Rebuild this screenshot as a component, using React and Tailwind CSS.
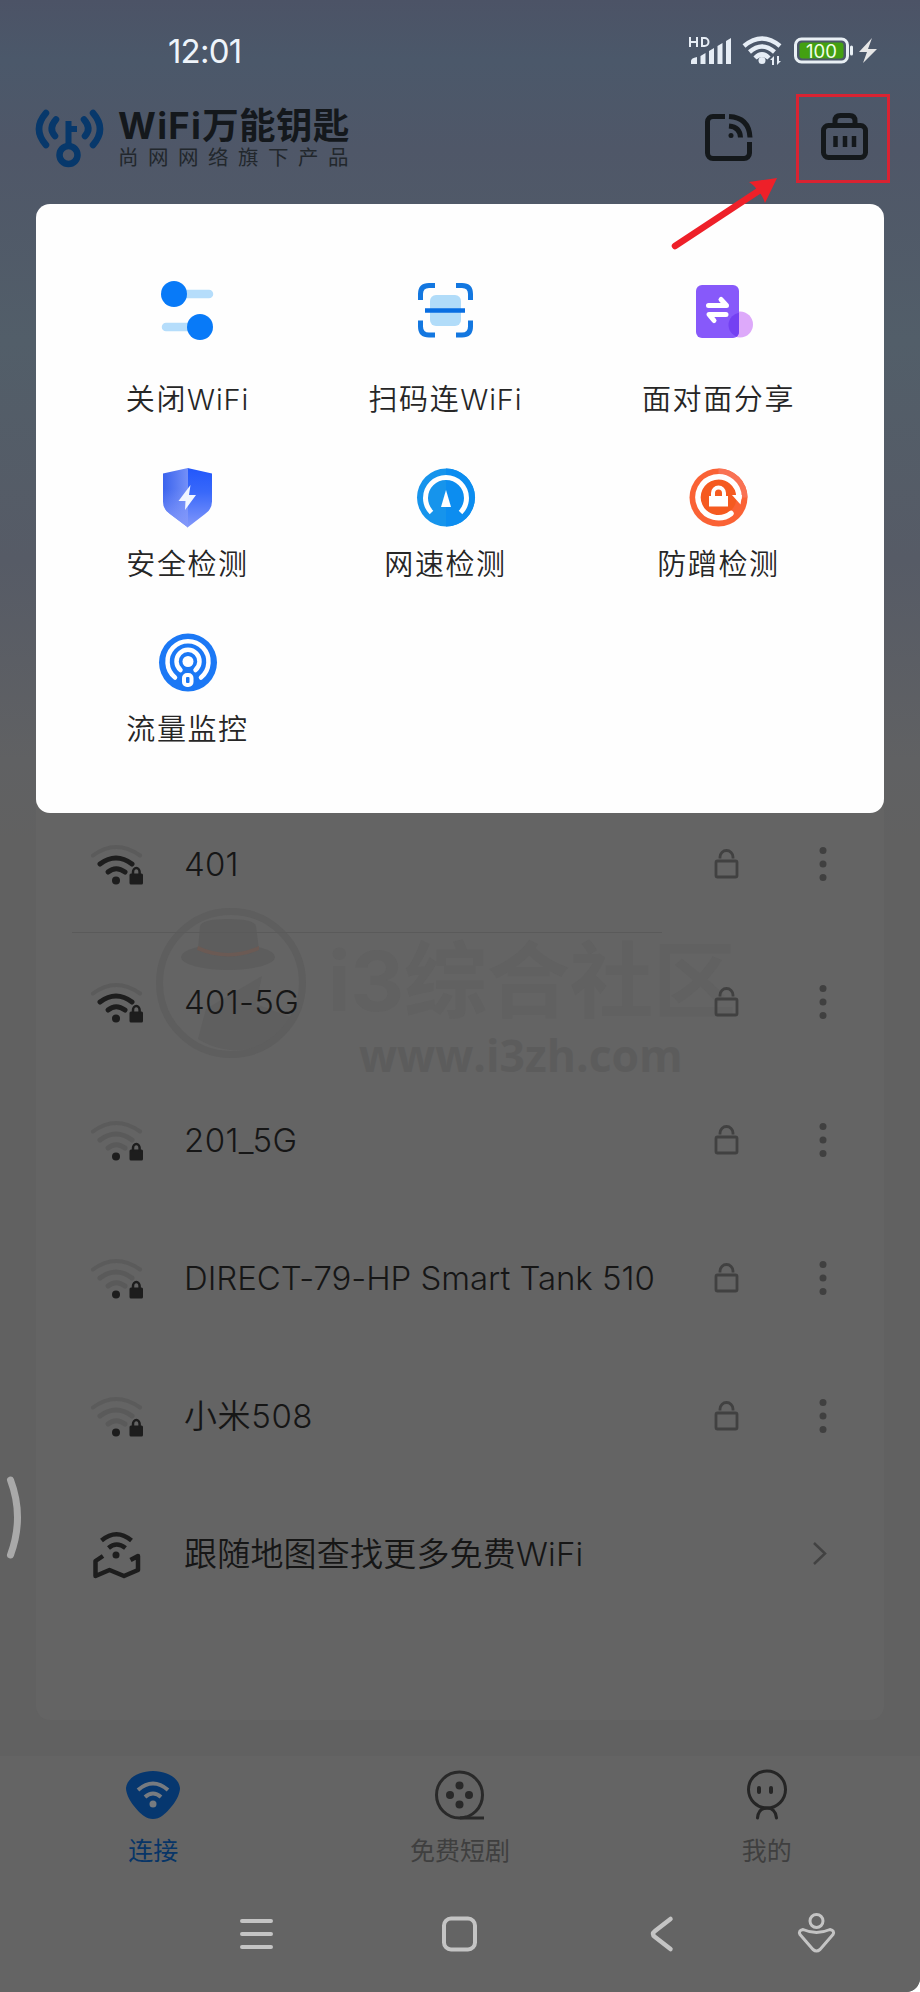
const cjk = 'font-["Inter","Noto_Sans_CJK_SC",sans-serif]';
const latin = 'font-["Inter","Noto_Sans_CJK_SC",sans-serif]';

function StatusBar() {
  return (
    <div className="flex h-[102px] items-center justify-between pl-[168px] pr-[42px] text-[#eef4fa]">
      <span className={`${latin} text-[33px] leading-none tracking-[-0.8px]`}>12:01</span>
      <svg className="h-[40px] w-[192px]" viewBox="686 31 192 40" fill="none">
        <g stroke="#e6edf5" strokeWidth="2">
          <path d="M690 37v10M697 37v10M690 42h7M702 38v8h2.500a4 4 0 0 0 0-8z" />
        </g>
        <g fill="#e6edf5">
          <path d="M691 64v-3q0-3 6-4v7zM700.500 56l5-3v11h-5zM709 51l5-3v16h-5zM717.500 46l5-3v21h-5zM726 41l5-3v26h-5z" />
          <circle cx="762" cy="60.500" r="3.500" />
          <path d="M770 60l4-4v9h-2v-5zM777 56h2v5h2l-4 4z" />
        </g>
        <g stroke="#e6edf5" strokeWidth="4.500">
          <path d="M744 46q18-15 36 0M749.500 52q12.500-11 25 0M755 58q7-7 14 0" />
        </g>
        <rect x="795.500" y="39" width="52" height="23" rx="6" stroke="#e9f0f5" strokeWidth="3" />
        <rect x="799.500" y="42.500" width="44" height="16" rx="3" fill="#43a012" />
        <path d="M851.500 47v7" stroke="#e9f0f5" strokeWidth="3" strokeLinecap="round" />
        <path d="M872 38l-13 14h8l-4 11 14-14h-9z" fill="#e6e6e6" />
        <text x="821.500" y="57.500" fontSize="18.500" textAnchor="middle" fill="#f1ffe9" fontFamily="Inter, sans-serif">100</text>
      </svg>
    </div>
  );
}

function Header() {
  return (
    <header className="flex h-[102px] justify-between pl-[34px] pr-[30px]">
      <div className="flex gap-[12px] text-[#14181c]">
        <svg className="h-[68px] w-[72px] mt-[4px]" viewBox="34 106 72 68" fill="none" stroke="#07386b" strokeLinecap="round">
          <path strokeWidth="6.500" d="M46 113q-14 16 0 32M93 113q14 16 0 32" />
          <path strokeWidth="6.500" d="M56 119.500q-8 9-1 16.500M84 119.500q8 9 1 16.500" />
          <path strokeWidth="6" strokeLinecap="butt" d="M68.500 121v25M70 129h7" />
          <circle cx="68.500" cy="155" r="9" strokeWidth="6.500" />
        </svg>
        <div className={cjk}>
          <div className="mt-[2px] text-[36.500px] font-bold leading-[44px] whitespace-nowrap">
            <span className="tracking-[1.300px]">WiFi</span>
            <span className="tracking-[0.300px]">万能钥匙</span>
          </div>
          <div className="-mt-[3px] text-[20.500px] leading-[26px] tracking-[9.500px] whitespace-nowrap text-[#22272c]">尚网网络旗下产品</div>
        </div>
      </div>
      <svg className="-mt-[10px] h-[102px] w-[198px]" viewBox="692 92 198 102" fill="none" stroke="#14181b" strokeWidth="5">
        <path d="M725 116.500h-12a5.500 5.500 0 0 0-5.500 5.500v31a5.500 5.500 0 0 0 5.500 5.500h31a5.500 5.500 0 0 0 5.500-5.500v-11" />
        <path d="M729 116.500q20 1 21 21M729 126q11 1 11.500 11.500" />
        <circle cx="731" cy="135.500" r="2.500" fill="#14181b" stroke="none" />
        <rect x="823.500" y="125.500" width="42" height="32" rx="5" />
        <path d="M835 125v-4q0-5.500 5.500-5.500h9q5.500 0 5.500 5.500v4" />
        <path d="M835.500 136v11M845 136v11M854 136v11" strokeWidth="4.500" />
        <rect x="797.500" y="95.500" width="91" height="86" stroke="#d92332" strokeWidth="3" />
      </svg>
    </header>
  );
}

const svg60 = "h-[60px] w-[60px] overflow-visible";

const TogglesIcon = () => (
  <svg className={svg60} viewBox="157 281 60 60">
    <path d="M175 294h34M166 327h34" stroke="#b5ddfb" strokeWidth="8.500" strokeLinecap="round" />
    <circle cx="174" cy="294" r="13" fill="#087af8" />
    <circle cx="200" cy="327" r="13" fill="#087af8" />
  </svg>
);
const ScanIcon = () => (
  <svg className={svg60} viewBox="415 281 60 60" fill="none" stroke="#1377e0" strokeWidth="5">
    <rect x="430" y="295" width="31" height="31" rx="6" fill="#b1dcf9" stroke="none" />
    <path d="M435 285.500h-6q-8.500 0-8.500 8.500v6M456 285.500h6q8.500 0 8.500 8.500v6M435 335h-6q-8.500 0-8.500-8.500v-6M456 335h6q8.500 0 8.500-8.500v-6" />
    <path d="M425 310.500h40" strokeWidth="4.500" stroke="#086ee2" />
  </svg>
);
const ShareIcon = () => (
  <svg className={svg60} viewBox="688 281 60 60">
    <defs>
      <clipPath id="cardClip"><rect x="696" y="285" width="43" height="53" rx="6" /></clipPath>
    </defs>
    <circle cx="740" cy="324.500" r="13" fill="#dda9fa" />
    <rect x="696" y="285" width="43" height="53" rx="6" fill="#8759fa" />
    <circle cx="741" cy="325" r="12.500" fill="#7440f2" clipPath="url(#cardClip)" />
    <g fill="none" stroke="#fff" strokeWidth="5" strokeLinecap="round" strokeLinejoin="round">
      <path d="M708.500 305.500h18l-5.500-6M726 314.500h-17l5 6" />
    </g>
  </svg>
);
const ShieldIcon = () => (
  <svg className={svg60} viewBox="157 467 60 60">
    <defs>
      <linearGradient id="shieldR" x1="0" y1="0" x2="0" y2="1"><stop offset="0" stopColor="#2257fb" /><stop offset=".4" stopColor="#3868fa" /><stop offset="1" stopColor="#8398fa" /></linearGradient>
      <linearGradient id="shieldL" x1="0" y1="0" x2="1" y2="0"><stop offset="0" stopColor="#3a63ed" /><stop offset="1" stopColor="#7490f8" /></linearGradient>
      <linearGradient id="shieldF" x1="0" y1="0" x2="0" y2="1"><stop offset=".35" stopColor="#8398fa" stopOpacity="0" /><stop offset="1" stopColor="#8398fa" /></linearGradient>
    </defs>
    <path d="M187.500 468l24.500 5.500v28q0 8-7 12.500l-17.500 13.500z" fill="url(#shieldR)" />
    <path d="M188 468l-25 5.500v28q0 8 7 12.500l18 13.500z" fill="url(#shieldL)" />
    <path d="M188 468l-25 5.500v28q0 8 7 12.500l18 13.500z" fill="url(#shieldF)" />
    <path d="M190.500 485l-12 16h7l-.5 9 11-15h-7z" fill="#f1f6ff" />
  </svg>
);
const SpeedIcon = () => (
  <svg className={svg60} viewBox="415 467 60 60">
    <circle cx="446" cy="497.500" r="29" fill="#1694ec" />
    <path d="M446 468.500a29 29 0 0 1 0 58z" fill="#0c8df0" />
    <path d="M431.500 512.500a20.500 20.500 0 1 1 29 0" fill="none" stroke="#fff" strokeWidth="5" />
    <path d="M446 490l5 17h-10z" fill="#fff" />
  </svg>
);
const GuardIcon = () => (
  <svg className={svg60} viewBox="688 467 60 60">
    <circle cx="718.500" cy="497.500" r="29" fill="#fa6235" />
    <path d="M718.500 468.500a29 29 0 0 1 29 29h-29z" fill="#f97254" />
    <circle cx="718.500" cy="497.500" r="18" fill="#f55a20" />
    <path d="M731 513.500a20.500 20.500 0 1 1 8-16" fill="none" stroke="#fff" strokeWidth="5.500" strokeLinecap="round" />
    <path d="M732 495h10l-1.500 9.500z" fill="#fff" />
    <path d="M709 496h19v10.500h-19z" fill="#fff" />
    <path d="M713 497v-4a5.500 5.500 0 0 1 11 0v4" fill="none" stroke="#fff" strokeWidth="4" />
  </svg>
);
const TrafficIcon = () => (
  <svg className={svg60} viewBox="157 632 60 60">
    <circle cx="188" cy="662.500" r="29" fill="#1b78f5" />
    <g fill="none" stroke="#fff" strokeWidth="4.500">
      <path strokeLinecap="round" d="M175 677.500a20.500 20.500 0 1 1 26 0" />
      <path strokeLinecap="round" d="M180.500 670a11.500 11.500 0 1 1 15 0" />
      <rect x="184" y="675" width="7.500" height="10" rx="3" strokeWidth="4" />
    </g>
    <circle cx="188" cy="661.500" r="5.500" fill="#fff" />
  </svg>
);

function Tool({ icon, label, suffix, first }) {
  return (
    <div className={`flex flex-col items-center ${first ? "h-[252px] gap-[39px] pt-[77px]" : "h-[165px] gap-[18px] pt-[11px]"}`}>
      {icon}
      <span className="h-[40px] pl-[1px] text-[29px] font-[350] leading-[40px] tracking-[1.600px] whitespace-nowrap text-[#262626]">
        {label}
        {suffix && <span className="tracking-[0.900px]">{suffix}</span>}
      </span>
    </div>
  );
}

function ToolPanel() {
  return (
    <section className={`${cjk} relative z-10 mx-[36px] grid h-[609px] grid-cols-[258px_258px_288px] content-start rounded-[14px] bg-[#fefefe] pl-[22px]`}>
      <Tool first icon={<TogglesIcon />} label="关闭" suffix="WiFi" />
      <Tool first icon={<ScanIcon />} label="扫码连" suffix="WiFi" />
      <Tool first icon={<ShareIcon />} label="面对面分享" />
      <Tool icon={<ShieldIcon />} label="安全检测" />
      <Tool icon={<SpeedIcon />} label="网速检测" />
      <Tool icon={<GuardIcon />} label="防蹭检测" />
      <Tool icon={<TrafficIcon />} label="流量监控" />
    </section>
  );
}

function WifiIcon({ strong }) {
  const c = strong ? "#1d1d1d" : "#5a5a5a";
  return (
    <svg className="h-[48px] w-[60px]" viewBox="88 840 60 48" fill="none" strokeLinecap="round">
      <path d="M93 855.500q23-17 47 0" stroke="#5b5b5b" strokeWidth="4" />
      <path d="M100 864q16-12 32 0" stroke={c} strokeWidth="5" />
      <path d="M108 872q8-6.500 17 0" stroke={c} strokeWidth="5" />
      <circle cx="116" cy="880.500" r="4" fill="#1d1d1d" />
      <rect x="129.500" y="873.500" width="13.500" height="11" rx="1.500" fill="#1d1d1d" />
      <path d="M133 874v-2a3.300 4 0 0 1 6.600 0v2" stroke="#1d1d1d" strokeWidth="2.500" />
    </svg>
  );
}

function Row({ name, strong, className }) {
  return (
    <div className="flex h-[138px] items-center pl-[52px] pr-[55px]">
      <WifiIcon strong={strong} />
      <span className={`${latin} ml-[36px] flex-1 whitespace-nowrap pt-[2px] text-[33px] font-[350] text-[#161616] ${className}`}>{name}</span>
      <svg className="h-[34px] w-[26px]" viewBox="713 847 26 34" fill="none" stroke="#414141" strokeWidth="2.800">
        <rect x="716" y="861" width="21" height="16" rx="1.500" />
        <path d="M720 858.500v-1.500a6.500 6.500 0 0 1 13 0v1.500" />
      </svg>
      <svg className="ml-[79px] h-[40px] w-[11px]" viewBox="817.500 844 11 40" fill="#404040">
        <circle cx="822.500" cy="850.500" r="3.500" />
        <circle cx="822.500" cy="864" r="3.500" />
        <circle cx="822.500" cy="877.500" r="3.500" />
      </svg>
    </div>
  );
}

function Watermark() {
  return (
    <div className="pointer-events-none absolute left-[119px] top-[112px] flex items-start text-[#5c5c5c]">
      <svg className="h-[152px] w-[152px]" viewBox="155 907 152 152" fill="none">
        <path d="M198 1039l8-30 56-33-6 28 40 15a72 72 0 0 1-98 20z" fill="#5f5f5f" />
        <circle cx="231" cy="983" r="71.500" stroke="#5e5e5e" strokeWidth="7" />
        <ellipse cx="228" cy="957" rx="47" ry="13" fill="#5d5d5d" />
        <path d="M198 950l2-24q2-7 28-7t28 7l3 24q-30 14-61 0z" fill="#5d5d5d" />
        <path d="M198 946q30 14 61 0v4q-31 13-62 0z" fill="#6b5a54" />
      </svg>
      <div className="ml-[21px] mt-[26px] text-[#616161]">
        <div className={`${cjk} text-[83px] font-bold leading-[96px] whitespace-nowrap`}>i3综合社区</div>
        <div className='ml-[31px] -mt-[2px] font-["Open_Sans",sans-serif] text-[44.500px] font-bold leading-[56px] text-[#5c5c5c]'>www.i3zh.com</div>
      </div>
    </div>
  );
}

function NetworkList() {
  return (
    <section className="relative mx-[36px] -mt-[18px] h-[925px] rounded-b-[14px] bg-[#646464]">
      <Watermark />
      <div className="relative">
        <Row strong name="401" className="tracking-[0.200px]" />
        <div className="-mt-px ml-[36px] h-px w-[590px] bg-[#5a5a5a]" />
        <Row strong name="401-5G" className="tracking-[0.300px]" />
        <Row name="201_5G" className="tracking-[0.400px]" />
        <Row name="DIRECT-79-HP Smart Tank 510" className="tracking-[-0.050px]" />
        <Row name="小米508" className="tracking-[0.600px]" />
        <div className="flex h-[138px] items-center pl-[52px] pr-[53px]">
          <svg className="h-[56px] w-[60px]" viewBox="88 1526 60 56" fill="none" stroke="#1d1d1d" strokeWidth="4.500">
            <path d="M101.500 1540.500q15-12.500 30 0M108.500 1548q8-7 17 0" />
            <circle cx="116" cy="1555" r="3.500" fill="#1d1d1d" stroke="none" />
            <path d="M103 1556l-7.500 5v15l14-6 14.500 6 14-6v-14l-7.500 4" strokeLinejoin="round" />
          </svg>
          <span className={`${latin} ml-[36px] flex-1 whitespace-nowrap pt-[2px] text-[33px] font-[350] text-[#161616] tracking-[0.200px]`}>跟随地图查找更多免费WiFi</span>
          <svg className="h-[28px] w-[20px]" viewBox="812 1540 20 28" fill="none" stroke="#424242" strokeWidth="2.500">
            <path d="M815 1543l11 10.500-11 10.500" />
          </svg>
        </div>
      </div>
    </section>
  );
}

function Tab({ icon, label, className }) {
  return (
    <div className="flex flex-1 flex-col items-center pt-[10px]">
      {icon}
      <span className={`mt-[9px] text-[25px] leading-[36px] ${className}`}>{label}</span>
    </div>
  );
}

function TabBar() {
  return (
    <nav className={`${cjk} mt-[36px] flex h-[122px] bg-[#646464]`}>
      <Tab
        label="连接"
        className="text-[#073567]"
        icon={
          <svg className="h-[58px] w-[60px]" viewBox="123 1766 60 58" fill="none">
            <path d="M153 1771c14 0 26 7 27 17 0 10-11 23-18 28-5 4-13 4-18 0-7-5-18-18-18-28 1-10 13-17 27-17z" fill="#06376f" />
            <path d="M138 1790q15-13 30 0M145 1797q8-7 16 0" stroke="#777b80" strokeWidth="4" />
            <circle cx="153" cy="1804" r="3.500" fill="#777b80" />
          </svg>
        }
      />
      <Tab
        label="免费短剧"
        className="text-[#3f3f3f]"
        icon={
          <svg className="h-[58px] w-[60px]" viewBox="430 1766 60 58" fill="#292929">
            <path d="M484 1818h-24a23 23 0 0 0 6-1" fill="none" stroke="#292929" strokeWidth="3" />
            <circle cx="459.500" cy="1795" r="23" fill="none" stroke="#292929" strokeWidth="3" />
            <circle cx="459.500" cy="1785.500" r="4" /><circle cx="450" cy="1795" r="4" />
            <circle cx="469" cy="1795" r="4" /><circle cx="459.500" cy="1804.500" r="4" />
          </svg>
        }
      />
      <Tab
        label="我的"
        className="text-[#3f3f3f]"
        icon={
          <svg className="h-[58px] w-[60px]" viewBox="736.500 1766 60 58" fill="none" stroke="#252525" strokeWidth="3" strokeLinecap="round">
            <circle cx="766.500" cy="1789.500" r="18.500" />
            <path d="M757 1818q1-10 9.500-10t9.500 10" />
            <path d="M758.500 1788v4M770.500 1788v4" strokeWidth="4" />
          </svg>
        }
      />
    </nav>
  );
}

function SystemNav() {
  return (
    <div className="flex h-[114px] items-center bg-[#646464] pl-[236px]">
      <svg className="-mt-[4px] h-[48px] w-[602px]" viewBox="236 1909 602 48" fill="none" stroke="#c4c4c4" strokeWidth="4" strokeLinecap="round">
        <path d="M242 1921h29M242 1934h29M242 1947h29" />
        <rect x="444" y="1918.500" width="31" height="31" rx="7" />
        <path d="M670.500 1919l-15.500 12q-4 3 0 6l15.500 12" strokeWidth="4.500" />
        <circle cx="816.500" cy="1921" r="6.500" strokeWidth="3" />
        <path d="M803 1929.500q13.500 6 27 0q5 1 3 5l-13 15q-3.500 3-7 0l-13-15q-2-4 3-5z" strokeWidth="3" strokeLinejoin="round" />
      </svg>
    </div>
  );
}

export default function App() {
  return (
    <div className="w-[920px] bg-white">
      <div className="relative flex h-[1992px] w-[920px] flex-col overflow-hidden rounded-br-[14px] bg-[linear-gradient(180deg,#4c5366_0px,#4b586a_60px,#4f5768_150px,#525e69_340px,#565b66_560px,#606163_760px,#616161_840px)]">
        <StatusBar />
        <Header />
        <ToolPanel />
        <NetworkList />
        <TabBar />
        <SystemNav />
        <svg className="pointer-events-none absolute left-[665px] top-[170px] z-20 h-[86px] w-[120px]" viewBox="665 170 120 86">
          <path d="M675 246l85-56" stroke="#ee2029" strokeWidth="6.500" strokeLinecap="round" />
          <path d="M777 178l-28 4q6 4 8 8 5 4 8 13z" fill="#ee2029" />
        </svg>
        <svg className="pointer-events-none absolute left-0 top-[1470px] h-[94px] w-[24px]" viewBox="0 1470 24 94">
          <path d="M10.500 1480q14 37 0 75" fill="none" stroke="#a9a9a9" strokeWidth="7" strokeLinecap="round" />
        </svg>
      </div>
    </div>
  );
}
